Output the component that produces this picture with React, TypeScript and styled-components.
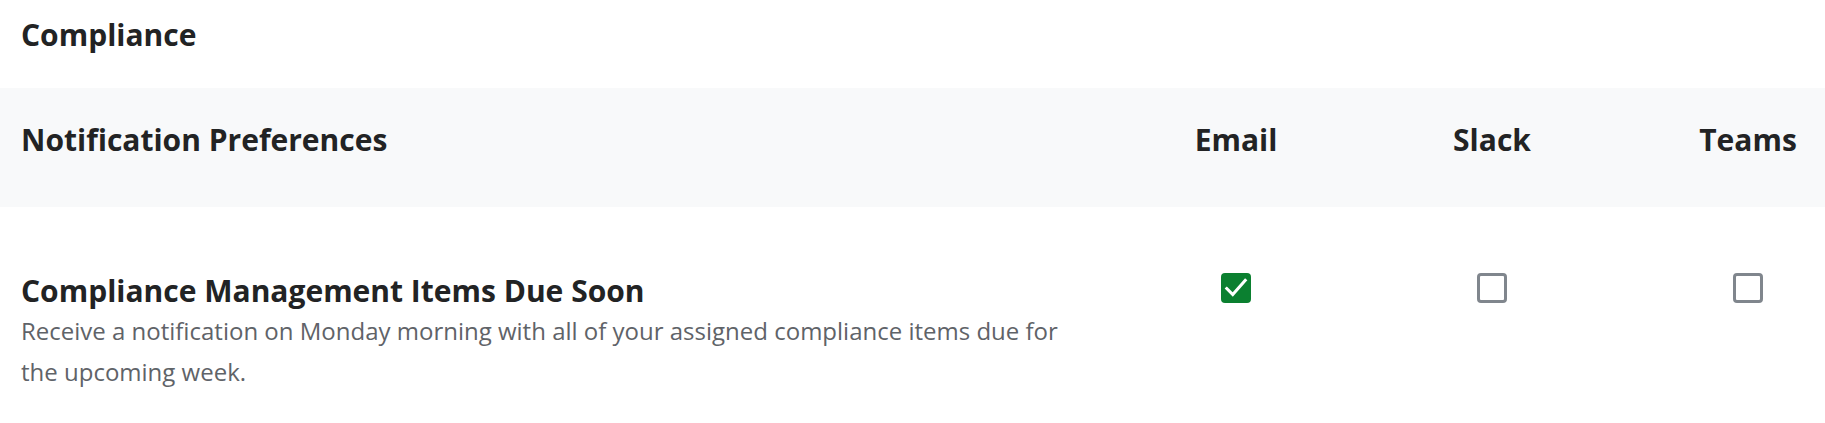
import React, { useState } from "react";
import styled, { createGlobalStyle } from "styled-components";

const Global = createGlobalStyle`
  html, body { margin: 0; padding: 0; background: #ffffff; }
  body { font-family: "Open Sans", "Noto Sans", sans-serif; color: #212529; }
  * { box-sizing: border-box; }
`;

const Page = styled.div`
  width: 1825px;
  display: flex;
  flex-direction: column;
`;

const SectionTitle = styled.h2`
  margin: 0;
  padding: 17px 21px 0;
  height: 88px;
  font-size: 30px;
  line-height: 36px;
  font-weight: 700;
  color: #222324;
`;

const Grid = styled.div`
  display: grid;
  grid-template-columns: minmax(0, 1fr) 154px 154px 154px;
  column-gap: 102px;
  padding: 0 0 0 21px;
`;

const HeaderRow = styled(Grid)`
  background: #f8f9fa;
  height: 119px;
  align-items: center;
`;

const HeadCell = styled.div<{ $center?: boolean }>`
  font-size: 30px;
  line-height: 40px;
  font-weight: 700;
  color: #222324;
  text-align: ${(p) => (p.$center ? "center" : "left")};
  margin-top: -16px;
`;

const BodyRow = styled(Grid)`
  padding-top: 65px;
  align-items: start;
`;

const ItemText = styled.div`
  width: 1065px;
`;

const ItemTitle = styled.div`
  font-size: 30px;
  font-weight: 700;
  line-height: 38px;
  color: #222324;
`;

const ItemDesc = styled.div`
  font-size: 24px;
  line-height: 41px;
  color: #5f6368;
`;

const BoxCell = styled.div`
  display: flex;
  justify-content: center;
  padding-top: 1px;
`;

const Box = styled.button<{ $on: boolean }>`
  width: 30px;
  height: 30px;
  padding: 0;
  border-radius: 4px;
  border: ${(p) => (p.$on ? "0" : "3px solid #80868d")};
  background: ${(p) => (p.$on ? "#0b8030" : "#ffffff")};
  display: flex;
  align-items: center;
  justify-content: center;
  cursor: pointer;
`;

const Check = () => (
  <svg width="26" height="26" viewBox="0 0 24 24" fill="none">
    <path d="M3.5 12.5 L9 18 L20.5 5" stroke="#fff" strokeWidth="2.8" strokeLinecap="square" />
  </svg>
);

export default function App() {
  const [vals, setVals] = useState([true, false, false]);
  const toggle = (i: number) => setVals((v) => v.map((x, j) => (j === i ? !x : x)));
  return (
    <Page>
      <Global />
      <SectionTitle>Compliance</SectionTitle>
      <HeaderRow>
        <HeadCell>Notification Preferences</HeadCell>
        <HeadCell $center>Email</HeadCell>
        <HeadCell $center>Slack</HeadCell>
        <HeadCell $center>Teams</HeadCell>
      </HeaderRow>
      <BodyRow>
        <ItemText>
          <ItemTitle>Compliance Management Items Due Soon</ItemTitle>
          <ItemDesc>
            Receive a notification on Monday morning with all of your assigned compliance items due for the upcoming week.
          </ItemDesc>
        </ItemText>
        {vals.map((on, i) => (
          <BoxCell key={i}>
            <Box $on={on} onClick={() => toggle(i)} aria-pressed={on}>
              {on && <Check />}
            </Box>
          </BoxCell>
        ))}
      </BodyRow>
    </Page>
  );
}
